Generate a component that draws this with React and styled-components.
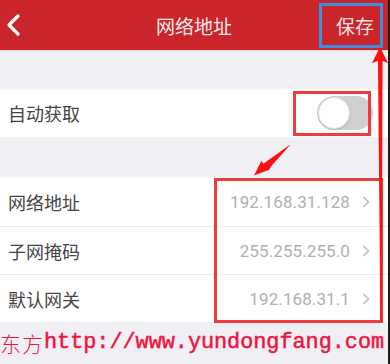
import React from "react";
import styled, { createGlobalStyle } from "styled-components";

const Global = createGlobalStyle`
  html, body { margin: 0; padding: 0; background: #efeff4; }
  body { font-family: Roboto, "Noto Sans CJK SC", sans-serif; }
`;

const Page = styled.div`
  position: relative;
  width: 390px;
  height: 364px;
  overflow: hidden;
  background: #efeff4;
  box-sizing: border-box;
  border-right: 2px solid #1c1c1c;
  display: flex;
  flex-direction: column;
`;

const Header = styled.header`
  height: 50px;
  flex: none;
  background: #c9252b;
  border-bottom: 1px solid #e6d6d8;
  display: grid;
  grid-template-columns: 60px 1fr 60px;
  align-items: center;
  color: #f4e8e8;
  font-family: "Noto Sans CJK SC", sans-serif;
`;

const Back = styled.div`
  display: flex;
  align-items: center;
  padding-left: 5px;
  height: 100%;
`;

const Title = styled.div`
  text-align: center;
  font-size: 19px;
  line-height: 1;
`;

const Save = styled.div`
  font-size: 19px;
  line-height: 1;
  text-align: right;
  padding-right: 14px;
  color: #f6dfe0;
`;

const Group = styled.section`
  background: #fff;
  margin-top: ${(p) => p.$top}px;
  display: flex;
  flex-direction: column;
`;

const Row = styled.div`
  height: ${(p) => p.$h || 49}px;
  box-sizing: border-box;
  display: flex;
  align-items: center;
  padding: 0 18px 0 8px;
  border-top: ${(p) => (p.$divider ? "1px solid #ebebeb" : "none")};
`;

const Label = styled.div`
  flex: 1;
  font-family: "Noto Sans CJK SC", sans-serif;
  font-size: 18px;
  color: #454545;
`;

const Value = styled.div`
  font-family: Roboto, sans-serif;
  font-size: 17px;
  color: #b0b0b0;
  margin-right: 12px;
  letter-spacing: 0.1px;
`;

const Toggle = styled.div`
  width: 56px;
  height: 34px;
  border-radius: 17px;
  background: #cfcfcf;
  margin-right: -3px;
  display: flex;
  align-items: center;
  padding-left: 1px;
  box-sizing: border-box;
`;

const Knob = styled.div`
  width: 32px;
  height: 32px;
  border-radius: 50%;
  background: #fff;
  box-sizing: border-box;
  border: 1px solid #e2e2e2;
  box-shadow: 0 1px 2px rgba(0, 0, 0, 0.15);
`;

const Watermark = styled.div`
  flex: 1;
  display: flex;
  align-items: center;
  white-space: nowrap;
  color: #f01441;
  padding-bottom: 1px;
`;

const WmCn = styled.span`
  font-family: "Noto Sans CJK SC", sans-serif;
  font-size: 21px;
  font-weight: 300;
  letter-spacing: 1px;
`;

const WmUrl = styled.span`
  font-family: "Liberation Mono", monospace;
  font-size: 21.8px;
  -webkit-text-stroke: 0.5px #f01441;
`;

const Frame = styled.div`
  position: absolute;
  left: ${(p) => p.$x}px;
  top: ${(p) => p.$y}px;
  width: ${(p) => p.$w}px;
  height: ${(p) => p.$h}px;
  box-sizing: border-box;
  border: 3px solid ${(p) => p.$color};
  pointer-events: none;
`;

const Overlay = styled.svg`
  position: absolute;
  left: 0;
  top: 0;
  pointer-events: none;
`;

const Chevron = () => (
  <svg width="8" height="12" viewBox="0 0 8 12">
    <path d="M1.5 1 L6.5 6 L1.5 11" fill="none" stroke="#bdbdbd" strokeWidth="1.6" />
  </svg>
);

const rows = [
  { label: "网络地址", value: "192.168.31.128" },
  { label: "子网掩码", value: "255.255.255.0" },
  { label: "默认网关", value: "192.168.31.1" },
];

export default function App() {
  return (
    <>
      <Global />
      <Page>
        <Header>
          <Back>
            <svg width="18" height="24" viewBox="0 0 18 24">
              <path d="M13 3 L4 12 L13 21" fill="none" stroke="#fff" strokeWidth="3.2" strokeLinecap="round" strokeLinejoin="round" />
            </svg>
          </Back>
          <Title>网络地址</Title>
          <Save>保存</Save>
        </Header>
        <Group $top={38}>
          <Row $h={48}>
            <Label>自动获取</Label>
            <Toggle>
              <Knob />
            </Toggle>
          </Row>
        </Group>
        <Group $top={40}>
          {rows.map((r, i) => (
            <Row key={r.label} $divider={i > 0} $h={i === 0 ? 49 : 48}>
              <Label>{r.label}</Label>
              <Value>{r.value}</Value>
              <Chevron />
            </Row>
          ))}
        </Group>
        <Watermark>
          <WmCn>东方</WmCn>
          <WmUrl>http://www.yundongfang.com</WmUrl>
        </Watermark>

        <Frame $x={319} $y={3} $w={64} $h={45} $color="#3d8fe0" />
        <Frame $x={293} $y={91} $w={78} $h={45} $color="#f23a3a" />
        <Frame $x={214} $y={178} $w={169} $h={145} $color="#f23a3a" />
        <Overlay width="390" height="364" viewBox="0 0 390 364">
          <polygon points="380,47 388,63 382.6,61 381.6,322 380.4,322 378,61 372,63" fill="#ff1010" />
          <polygon points="290.3,144.6 289.7,145.4 270.7,166.7 269.3,169.7 254,175.5 261.5,160.7 263.3,163.7" fill="#ff1010" />
        </Overlay>
      </Page>
    </>
  );
}
